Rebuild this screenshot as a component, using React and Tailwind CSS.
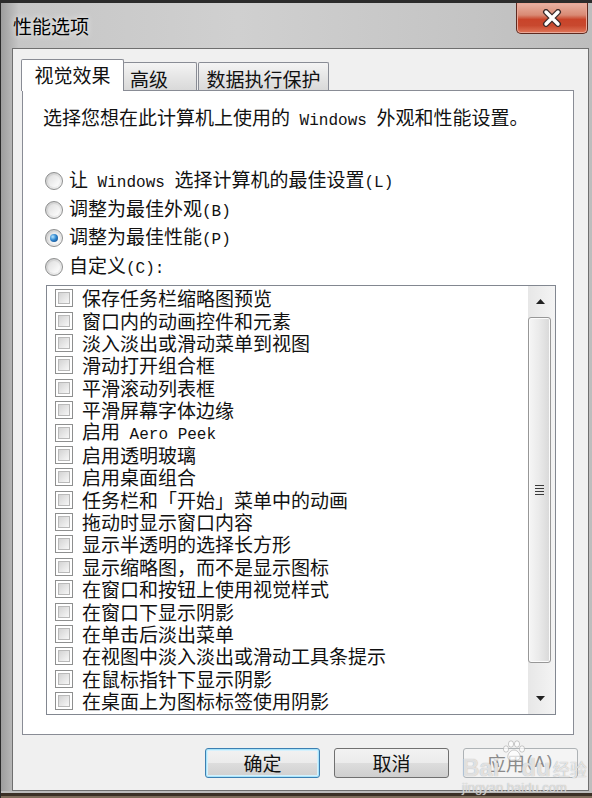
import React from "react"

const items = [
  ["保存任务栏缩略图预览"],
  ["窗口内的动画控件和元素"],
  ["淡入淡出或滑动菜单到视图"],
  ["滑动打开组合框"],
  ["平滑滚动列表框"],
  ["平滑屏幕字体边缘"],
  ["启用", " Aero Peek"],
  ["启用透明玻璃"],
  ["启用桌面组合"],
  ["任务栏和「开始」菜单中的动画"],
  ["拖动时显示窗口内容"],
  ["显示半透明的选择长方形"],
  ["显示缩略图，而不是显示图标"],
  ["在窗口和按钮上使用视觉样式"],
  ["在窗口下显示阴影"],
  ["在单击后淡出菜单"],
  ["在视图中淡入淡出或滑动工具条提示"],
  ["在鼠标指针下显示阴影"],
  ["在桌面上为图标标签使用阴影"],
]

// half-width latin, like SimSun
function Half({ children }) {
  return <span className="whitespace-pre font-['Liberation_Mono',monospace] text-[16px]">{children}</span>
}

function Radio({ checked, children }) {
  return (
    <div className="flex h-[28.5px] items-center">
      <span className="flex h-[18px] w-[18px] items-center justify-center rounded-full border border-[#8e8f8f] bg-[linear-gradient(135deg,#c9c9c9,#f6f6f6)] p-[2px]">
        <span className="flex h-full w-full items-center justify-center rounded-full bg-[linear-gradient(135deg,#dedede,#ffffff)]">
          {checked && (
            <span className="h-[8px] w-[8px] rounded-full bg-[radial-gradient(circle_at_35%_35%,#b6e6ff,#2f86cf_45%,#0d3f7a)]" />
          )}
        </span>
      </span>
      <span className="ml-[6px] text-[19px] leading-[24px]">{children}</span>
    </div>
  )
}

function Checkbox() {
  return (
    <span className="flex h-[18px] w-[18px] shrink-0 items-center justify-center border border-[#8e8f8f] bg-white p-[2px]">
      <span className="h-full w-full border border-[#b9b9b9] bg-[linear-gradient(135deg,#d3d3d3,#f7f7f7)]" />
    </span>
  )
}

function Arrow({ down }) {
  return (
    <svg width="9" height="5" viewBox="0 0 9 5">
      <polygon points={down ? "0,0 9,0 4.5,5" : "0,5 9,5 4.5,0"} fill="#222" />
    </svg>
  )
}

function Button({ children, focused, disabled }) {
  let cls = "border-[#707070] text-[#111]"
  if (focused) cls = "border-[#3c7fb1] text-[#111] shadow-[inset_0_0_0_1px_#a8e4fb,inset_0_0_0_2px_#d5f1fd]"
  if (disabled) cls = "border-[#adb2b5] text-[#8a8a8a]"
  return (
    <div
      className={
        "flex h-[30px] w-[115px] items-center justify-center rounded-[3px] border text-[19px] leading-[24px] " +
        cls +
        (disabled
          ? " bg-[#f4f4f4]"
          : " bg-[linear-gradient(180deg,#f2f2f2,#ebebeb_50%,#dddddd_50%,#cfcfcf)]")
      }
    >
      {children}
    </div>
  )
}

export default function App() {
  return (
    <div className="relative flex h-[798px] w-[592px] flex-col overflow-hidden border-l border-t-[3px] border-[#2b2b2b] bg-[linear-gradient(90deg,#9d9d9d,#c6c6c6_3%,#d0d0d0_40%,#c4c4c4_80%,#bdbdbd)] font-['Noto_Sans_CJK_SC',sans-serif] text-[#111]">
      {/* title bar */}
      <div className="flex h-[45px] shrink-0 items-start justify-between">
        <div className="ml-[12px] pt-[11px] text-[19px] leading-[24px] text-black [text-shadow:0_0_6px_#ffffff]">
          性能选项
        </div>
        <div className="mr-[4px] flex h-[31px] w-[72px] items-center justify-center rounded-b-[5px] border border-t-0 border-[#5e2a20] bg-[linear-gradient(180deg,#e9b3a5,#d98a74_40%,#c9442a_55%,#c8482e_75%,#e0775a)] shadow-[inset_0_0_0_1px_#eba898]">
          <svg width="22" height="18" viewBox="0 0 22 18">
            <path d="M5 3 L17 15 M17 3 L5 15" stroke="#3b2a2a" strokeWidth="6" strokeLinecap="round" />
            <path d="M5 3 L17 15 M17 3 L5 15" stroke="#ffffff" strokeWidth="3.4" strokeLinecap="round" />
          </svg>
        </div>
      </div>

      {/* client area */}
      <div className="ml-[11px] mr-[3px] flex h-[743px] shrink-0 flex-col border border-[#6f6f6f] bg-[#f0f0f0]">
        {/* tabs */}
        <div className="mt-[10px] flex h-[31px] items-end pl-[8px]">
          <div className="relative z-10 -mb-px flex h-[32px] w-[103px] justify-center rounded-t-[2px] border border-b-0 border-[#898c95] bg-white pt-[3px] text-[19px] leading-[24px]">
            视觉效果
          </div>
          <div className="-ml-px flex h-[28px] w-[74px] rounded-t-[2px] border border-b-0 border-[#898c95] bg-[linear-gradient(180deg,#f4f4f4,#e6e6e6_50%,#d9d9d9)] pl-[6px] pt-[4px] text-[19px] leading-[24px]">
            高级
          </div>
          <div className="ml-[1px] flex h-[28px] w-[131px] justify-center rounded-t-[2px] border border-b-0 border-[#898c95] bg-[linear-gradient(180deg,#f4f4f4,#e6e6e6_50%,#d9d9d9)] pt-[4px] text-[19px] leading-[24px]">
            数据执行保护
          </div>
        </div>

        {/* panel */}
        <div className="ml-[9px] flex h-[645px] w-[552px] flex-col border border-[#898c95] bg-white">
          <div className="ml-[20px] mt-[15px] text-[19px] leading-[22px]">
            选择您想在此计算机上使用的<Half> Windows </Half>外观和性能设置。
          </div>

          <div className="ml-[22px] mt-[35px] flex flex-col">
            <Radio>
              让<Half> Windows </Half>选择计算机的最佳设置<Half>(L)</Half>
            </Radio>
            <Radio>
              调整为最佳外观<Half>(B)</Half>
            </Radio>
            <Radio checked>
              调整为最佳性能<Half>(P)</Half>
            </Radio>
            <Radio>
              自定义<Half>(C):</Half>
            </Radio>
          </div>

          {/* list box */}
          <div className="ml-[23px] mt-[4px] flex h-[430px] w-[510px] border border-[#828790]">
            <div className="flex flex-1 flex-col pl-[8px] pt-[1px]">
              {items.map((it, i) => (
                <div key={i} className="flex h-[22.4px] items-center">
                  <Checkbox />
                  <span className="ml-[9px] whitespace-nowrap text-[19px] leading-[22px]">
                    {it[0]}
                    {it[1] && <Half>{it[1]}</Half>}
                  </span>
                </div>
              ))}
            </div>
            <div className="flex w-[27px] flex-col bg-[linear-gradient(90deg,#e7e7e7,#f4f4f4)]">
              <div className="flex h-[31px] items-center justify-center pr-[3px]">
                <Arrow />
              </div>
              <div className="flex h-[346px] w-[23px] items-center justify-center rounded-[3px] border border-[#979797] bg-[linear-gradient(90deg,#f6f6f6,#ebebeb_45%,#d8d8d8)] shadow-[inset_0_0_0_1px_#fbfbfb]">
                <div className="flex flex-col gap-[2px]">
                  <span className="h-px w-[9px] bg-[#3a3a3a]" />
                  <span className="h-px w-[9px] bg-[#3a3a3a]" />
                  <span className="h-px w-[9px] bg-[#3a3a3a]" />
                  <span className="h-px w-[9px] bg-[#3a3a3a]" />
                </div>
              </div>
              <div className="flex-1" />
              <div className="flex h-[31px] items-center justify-center pr-[3px]">
                <Arrow down />
              </div>
            </div>
          </div>
        </div>

        {/* buttons */}
        <div className="mt-[13px] flex justify-end gap-[14px] pr-[10px]">
          <Button focused>确定</Button>
          <Button>取消</Button>
          <Button disabled>
            应用<Half>(A)</Half>
          </Button>
        </div>
      </div>

      {/* bottom frame */}
      <div className="h-[7px] shrink-0 bg-[linear-gradient(180deg,#bdbdbd_0,#bdbdbd_30%,#3b3026_30%,#3b3026_65%,#7d6c5a_65%)]" />

      {/* baidu watermark */}
      <div className="pointer-events-none absolute left-[461px] top-[737px] flex flex-col items-start text-white/70 [text-shadow:0_0_1px_#9a9a9a]">
        <svg className="ml-[40px]" width="24" height="22" viewBox="0 0 24 22">
          <g fill="#ffffff" fillOpacity="0.7" stroke="#a8a8a8" strokeWidth="0.6">
            <ellipse cx="4" cy="9" rx="2.6" ry="3.2" />
            <ellipse cx="9" cy="4" rx="2.6" ry="3.2" />
            <ellipse cx="15" cy="4" rx="2.6" ry="3.2" />
            <ellipse cx="20" cy="9" rx="2.6" ry="3.2" />
            <path d="M12 10 C8 10 5 15 6 18 C7 21 10 20 12 20 C14 20 17 21 18 18 C19 15 16 10 12 10 Z" />
          </g>
        </svg>
        <div className="-mt-[6px] flex items-baseline font-['Liberation_Sans',sans-serif] text-[24px] font-bold leading-[24px]">
          <span>Bai</span>
          <span className="ml-[22px]">du</span>
          <span className="ml-[2px] font-['Noto_Sans_CJK_SC',sans-serif] text-[17px] font-normal">经验</span>
        </div>
        <div className="font-['Liberation_Sans',sans-serif] text-[13px] leading-[14px] text-white/60">jingyan.baidu.com</div>
      </div>
    </div>
  )
}
